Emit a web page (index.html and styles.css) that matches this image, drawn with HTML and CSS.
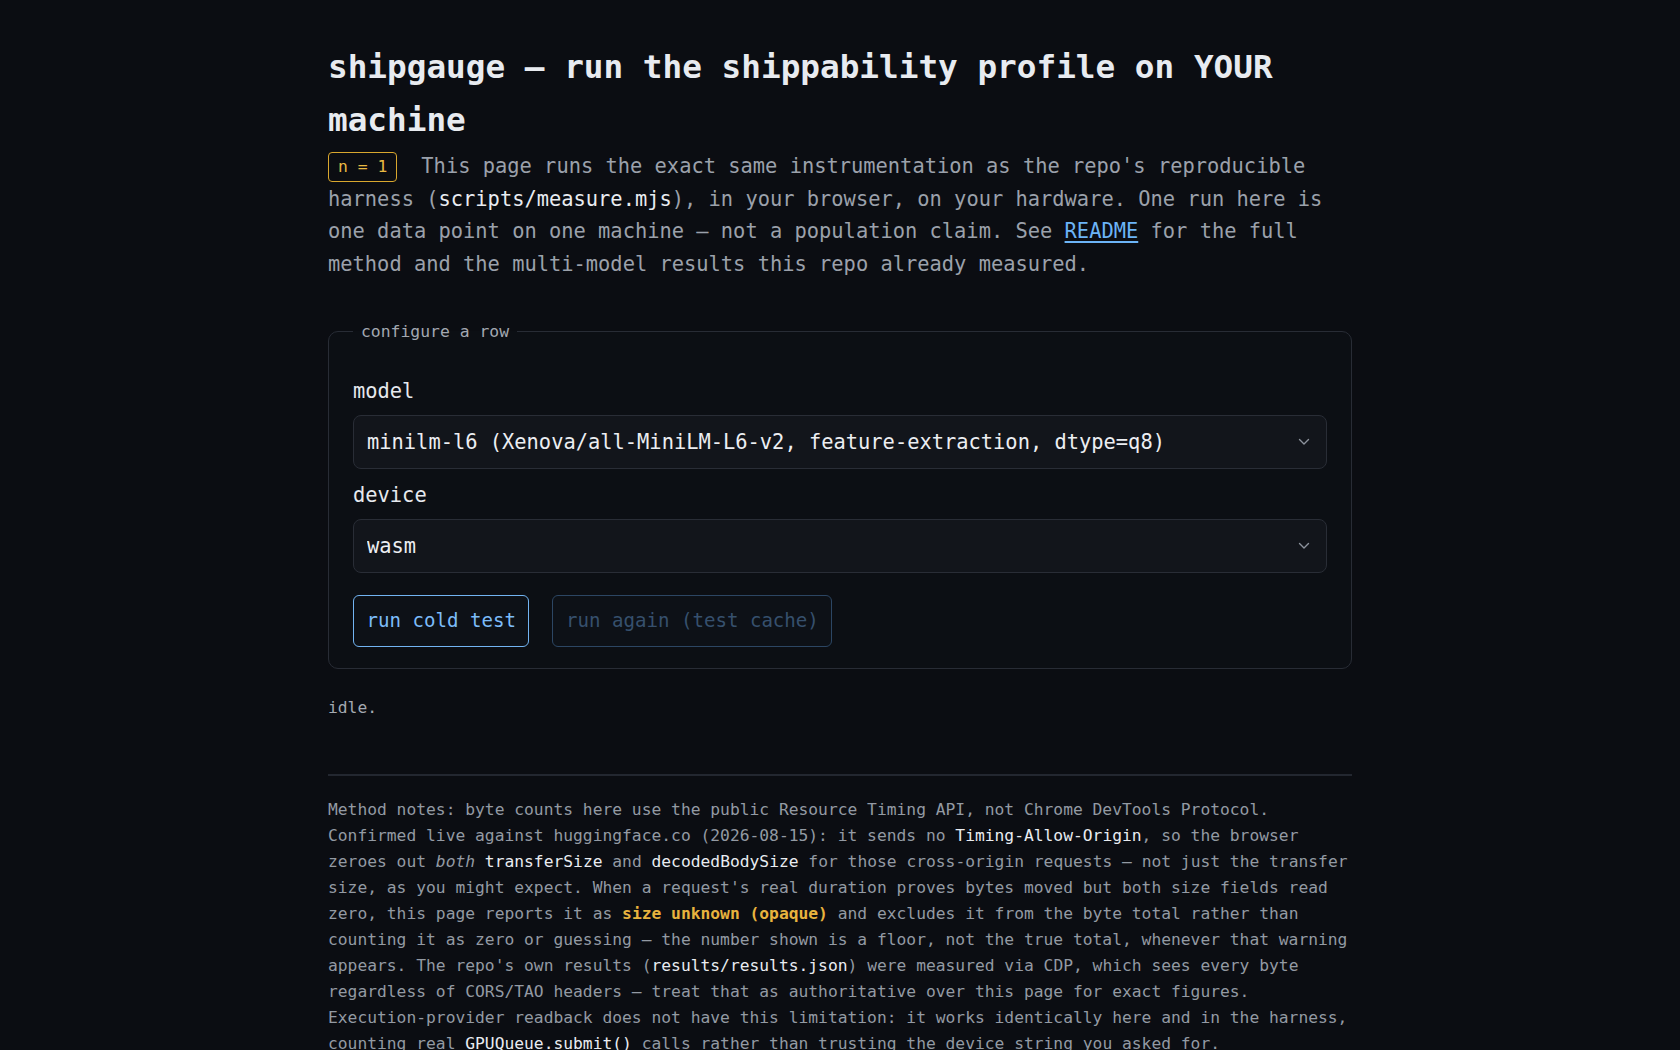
FILE: index.html
```html
<!DOCTYPE html>
<html lang="en">
<head>
<meta charset="utf-8">
<title>shipgauge</title>
<link rel="stylesheet" href="styles.css">
</head>
<body>
<main class="page">
  <h1 class="title">shipgauge — run the shippability profile on YOUR machine</h1>
  <p class="lede"><span class="badge">n = 1</span>This page runs the exact same instrumentation as the repo's reproducible harness (<code>scripts/measure.mjs</code>), in your browser, on your hardware. One run here is one data point on one machine — not a population claim. See <a class="link" href="#">README</a> for the full method and the multi-model results this repo already measured.</p>

  <fieldset class="config">
    <legend class="config-legend">configure a row</legend>
    <div class="field">
      <label class="field-label" for="model">model</label>
      <div class="select-wrap">
        <select class="select" id="model">
          <option>minilm-l6 (Xenova/all-MiniLM-L6-v2, feature-extraction, dtype=q8)</option>
        </select>
        <svg class="chevron" width="12" height="8" viewBox="0 0 12 8" aria-hidden="true"><path d="M1.5 1.5 L6 6 L10.5 1.5" fill="none" stroke="currentColor" stroke-width="1.4" stroke-linecap="round" stroke-linejoin="round"/></svg>
      </div>
    </div>
    <div class="field">
      <label class="field-label" for="device">device</label>
      <div class="select-wrap">
        <select class="select" id="device">
          <option>wasm</option>
        </select>
        <svg class="chevron" width="12" height="8" viewBox="0 0 12 8" aria-hidden="true"><path d="M1.5 1.5 L6 6 L10.5 1.5" fill="none" stroke="currentColor" stroke-width="1.4" stroke-linecap="round" stroke-linejoin="round"/></svg>
      </div>
    </div>
    <div class="actions">
      <button class="btn btn-primary" type="button">run cold test</button>
      <button class="btn btn-disabled" type="button" disabled>run again (test cache)</button>
    </div>
  </fieldset>

  <p class="status">idle.</p>

  <hr class="rule">

  <p class="notes">Method notes: byte counts here use the public Resource Timing API, not Chrome DevTools Protocol. Confirmed live against huggingface.co (2026-08-15): it sends no <code>Timing-Allow-Origin</code>, so the browser zeroes out <em>both</em> <code>transferSize</code> and <code>decodedBodySize</code> for those cross-origin requests — not just the transfer size, as you might expect. When a request's real duration proves bytes moved but both size fields read zero, this page reports it as <strong class="warn">size unknown (opaque)</strong> and excludes it from the byte total rather than counting it as zero or guessing — the number shown is a floor, not the true total, whenever that warning appears. The repo's own results (<code>results/results.json</code>) were measured via CDP, which sees every byte regardless of CORS/TAO headers — treat that as authoritative over this page for exact figures. Execution-provider readback does not have this limitation: it works identically here and in the harness, counting real <code>GPUQueue.submit()</code> calls rather than trusting the device string you asked for.</p>
</main>
</body>
</html>
```

FILE: styles.css
```css
html, body {
  margin: 0;
  padding: 0;
  background: #0b0d12;
}

body {
  font-family: "DejaVu Sans Mono", "Liberation Mono", monospace;
  color: #9ba1ab;
  font-size: 20.4px;
  line-height: 1.6;
}

.page {
  width: 1024px;
  margin: 0 auto;
  padding-top: 41px;
  padding-bottom: 40px;
}

.title {
  font-size: 32.7px;
  line-height: 52.5px;
  font-weight: 700;
  color: #e8ebf0;
  margin: 0 0 4px;
}

.lede {
  margin: 0;
}

.badge {
  display: inline-block;
  font-size: 16.4px;
  line-height: 28px;
  padding: 0 9px;
  margin-right: 24px;
  border: 1px solid #d9a72e;
  border-radius: 4px;
  color: #e8b943;
  vertical-align: 1px;
}

code {
  font: inherit;
  color: #e9ecf1;
}

.link {
  color: #6cb4f7;
  text-decoration: underline;
  text-underline-offset: 3px;
}

.config {
  margin: 38px 0 0;
  padding: 30px 24px 21px;
  border: 1px solid #282c35;
  border-radius: 10px;
  background: #0c0f14;
  min-width: 0;
}

.config-legend {
  font-size: 16.4px;
  line-height: 26px;
  padding: 0 8px;
  color: #a3a8b1;
}

.field {
  display: flex;
  flex-direction: column;
  gap: 8px;
  margin-bottom: 10px;
}

.field-label {
  font-size: 20.4px;
  line-height: 32px;
  color: #e6e9ee;
}

.select-wrap {
  position: relative;
}

.select {
  appearance: none;
  -webkit-appearance: none;
  display: block;
  width: 100%;
  height: 54px;
  padding: 0 40px 0 13px;
  font-family: inherit;
  font-size: 20.4px;
  color: #eceef2;
  background: #12151b;
  border: 1px solid #292d36;
  border-radius: 8px;
  outline: none;
}

.chevron {
  position: absolute;
  right: 17px;
  top: 50%;
  margin-top: -4px;
  color: #8c929c;
  pointer-events: none;
}

.actions {
  display: flex;
  gap: 23px;
  margin-top: 22px;
}

.btn {
  font-family: inherit;
  font-size: 19.1px;
  line-height: 26px;
  padding: 12px 12.5px;
  border-radius: 6px;
  background: #0d1117;
  cursor: pointer;
}

.btn-primary {
  color: #7cbcf9;
  border: 1.5px solid #72b4f2;
}

.btn-disabled {
  color: #36506d;
  border: 1.5px solid #2c4663;
  cursor: default;
}

.status {
  font-size: 16.3px;
  line-height: 26px;
  color: #a4a9b1;
  margin: 26px 0 0;
}

.rule {
  border: 0;
  border-top: 2px solid #232730;
  margin: 53px 0 0;
  height: 0;
}

.notes {
  font-size: 16.3px;
  line-height: 26.1px;
  color: #939aa3;
  margin: 21px 0 0;
}

.notes em {
  font-style: italic;
}

.warn {
  color: #e8b33e;
  font-weight: 700;
}
```
